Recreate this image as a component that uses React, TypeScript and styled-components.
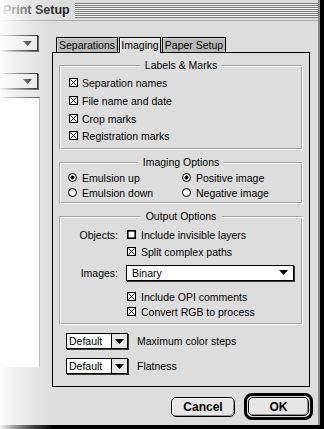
import React from "react";
import styled, { createGlobalStyle } from "styled-components";

const GlobalStyle = createGlobalStyle`
  html, body {
    margin: 0;
    padding: 0;
    background: #ffffff;
  }
  body {
    font-family: "Liberation Sans", Arial, sans-serif;
    font-size: 10.5px;
    color: #000000;
  }
`;

const Screen = styled.div`
  position: relative;
  width: 324px;
  height: 429px;
  background: #000000;
  overflow: hidden;
`;

const Window = styled.div`
  width: 318px;
  height: 425px;
  border-right: 2px solid #8a8a8a;
  background: #dddddd;
  display: flex;
  flex-direction: column;
`;

const TitleBar = styled.div`
  height: 20px;
  border-bottom: 1px solid #a8a8a8;
  display: flex;
  align-items: center;
  gap: 5px;
  padding-left: 3px;
  background: #dddddd;
`;

const Title = styled.span`
  font-size: 12.5px;
  font-weight: bold;
  color: #222222;
  white-space: nowrap;
`;

const Stripes = styled.div`
  flex: 1;
  height: 15px;
  margin-top: 1px;
  background: repeating-linear-gradient(
    to bottom,
    #7a7a7a 0px,
    #7a7a7a 1px,
    #f4f4f4 1px,
    #f4f4f4 2px
  );
`;

const Body = styled.div`
  flex: 1;
  display: flex;
`;

const SideColumn = styled.div`
  width: 52px;
  display: flex;
  flex-direction: column;
  align-items: flex-start;
  padding-top: 14px;
  box-sizing: border-box;
`;

const SidePopup = styled.div<{ $mt?: number }>`
  margin-left: -12px;
  margin-top: ${(p) => p.$mt ?? 0}px;
  width: 50px;
  height: 16px;
  box-sizing: border-box;
  border: 1px solid #000000;
  box-shadow: 1px 1px 0 #4a4a4a;
  background: #e4e4e4;
  display: flex;
  align-items: center;
  justify-content: flex-end;
  padding-right: 5px;
`;

const SideList = styled.div`
  margin-top: 8px;
  width: 40px;
  height: 270px;
  box-sizing: border-box;
  background: #ffffff;
  border-top: 1px solid #333333;
  border-right: 1px solid #b0b0b0;
`;

const Main = styled.div`
  flex: 1;
  display: flex;
  flex-direction: column;
`;

const TabStrip = styled.div`
  display: flex;
  align-items: flex-start;
  gap: 1px;
  height: 15px;
  margin-top: 16px;
  padding-left: 4px;
  position: relative;
  z-index: 1;
`;

const Tab = styled.div<{ $w: number; $active?: boolean }>`
  width: ${(p) => p.$w}px;
  height: ${(p) => (p.$active ? 16 : 15)}px;
  box-sizing: border-box;
  border: 1px solid #000000;
  border-bottom: none;
  background: ${(p) => (p.$active ? "#dddddd" : "#bababa")};
  box-shadow: inset 1px 1px 0 ${(p) => (p.$active ? "#f4f4f4" : "#d4d4d4")};
  font-size: 10.5px;
  line-height: 14px;
  text-align: center;
  white-space: nowrap;
`;

const Panel = styled.div`
  width: 258px;
  height: 335px;
  box-sizing: border-box;
  border: 1px solid #000000;
  background: #dddddd;
  padding: 12px 6px 0 6px;
  display: flex;
  flex-direction: column;
`;

const GroupBox = styled.div<{ $h: number; $mt?: number; $pt: number; $pl?: number }>`
  position: relative;
  height: ${(p) => p.$h}px;
  margin-top: ${(p) => p.$mt ?? 0}px;
  box-sizing: border-box;
  border: 1px solid #a6a6a6;
  border-right-color: #ffffff;
  border-bottom-color: #ffffff;
  box-shadow: inset 1px 1px 0 #ffffff, inset -1px -1px 0 #a6a6a6;
  padding-top: ${(p) => p.$pt}px;
  padding-left: ${(p) => p.$pl ?? 0}px;
`;

const Caption = styled.span`
  position: absolute;
  top: -8px;
  left: 50%;
  transform: translateX(-50%);
  padding: 0 5px;
  background: #dddddd;
  line-height: 14px;
  white-space: nowrap;
`;

const CheckRow = styled.div<{ $mt?: number }>`
  height: 17px;
  margin-top: ${(p) => p.$mt ?? 0}px;
  display: flex;
  align-items: center;
  gap: 4px;
  white-space: nowrap;
`;

const RadioGrid = styled.div`
  display: grid;
  grid-template-columns: 114px 1fr;
  grid-auto-rows: 15px;
`;

const RadioRow = styled.div`
  display: flex;
  align-items: center;
  gap: 5px;
  white-space: nowrap;
`;

const OutRow = styled.div<{ $mt?: number; $h?: number }>`
  display: grid;
  grid-template-columns: 58px 1fr;
  column-gap: 9px;
  align-items: center;
  height: ${(p) => p.$h ?? 15}px;
  margin-top: ${(p) => p.$mt ?? 0}px;
`;

const OutLabel = styled.span`
  text-align: right;
  white-space: nowrap;
`;

const OutCheck = styled.div`
  display: flex;
  align-items: center;
  gap: 5px;
  white-space: nowrap;
`;

const WidePopup = styled.div`
  width: 168px;
  height: 16px;
  margin-left: -1px;
  box-sizing: border-box;
  border: 1px solid #000000;
  box-shadow: 1px 1px 0 #3a3a3a;
  background: #ffffff;
  display: flex;
  align-items: center;
  justify-content: space-between;
  padding: 0 5px 0 5px;
`;

const StepStack = styled.div`
  margin-top: 8px;
  padding-left: 7px;
  display: flex;
  flex-direction: column;
  gap: 9px;
`;

const StepRow = styled.div`
  display: flex;
  align-items: center;
  gap: 9px;
  white-space: nowrap;
`;

const SmallPopup = styled.div`
  width: 62px;
  height: 16px;
  box-sizing: border-box;
  border: 1px solid #000000;
  box-shadow: 1px 1px 0 #3a3a3a;
  background: #ffffff;
  display: flex;
`;

const PopupValue = styled.span`
  flex: 1;
  padding-left: 2px;
  line-height: 14px;
`;

const PopupArrowCell = styled.span`
  width: 15px;
  border-left: 1px solid #000000;
  background: #e6e6e6;
  display: flex;
  align-items: center;
  justify-content: center;
`;

const ButtonRow = styled.div`
  margin-top: 6px;
  padding-right: 5px;
  display: flex;
  justify-content: flex-end;
  align-items: center;
  gap: 9px;
`;

const PushButton = styled.div<{ $w: number; $h: number }>`
  width: ${(p) => p.$w}px;
  height: ${(p) => p.$h}px;
  box-sizing: border-box;
  border: 1px solid #000000;
  border-radius: 5px;
  background: #e6e6e6;
  box-shadow: inset 1px 1px 0 #ffffff, inset -1px -1px 0 #8e8e8e;
  font-size: 12px;
  font-weight: bold;
  display: flex;
  align-items: center;
  justify-content: center;
`;

const DefaultRing = styled.div`
  border: 3px solid #000000;
  border-radius: 8px;
  padding: 1px;
`;

const FadeOverlay = styled.div`
  position: absolute;
  left: 0;
  top: 0;
  bottom: 0;
  width: 56px;
  pointer-events: none;
  background: linear-gradient(
    to right,
    rgba(255, 255, 255, 0.96) 0px,
    rgba(255, 255, 255, 0.62) 14px,
    rgba(255, 255, 255, 0.25) 34px,
    rgba(255, 255, 255, 0) 54px
  );
`;

const Arrow = () => (
  <svg width="9" height="5" viewBox="0 0 9 5">
    <polygon points="0,0 9,0 4.5,5" fill="#000" />
  </svg>
);

const CheckBox = ({ checked = true }: { checked?: boolean }) => (
  <svg width="9" height="9" viewBox="0 0 9 9" style={{ flex: "none" }}>
    {checked ? (
      <>
        <rect x="0.5" y="0.5" width="8" height="8" fill="#fff" stroke="#000" />
        <path d="M1.5 1.5L7.5 7.5M7.5 1.5L1.5 7.5" stroke="#000" strokeWidth="1" />
      </>
    ) : (
      <rect x="0.8" y="0.8" width="7.4" height="7.4" fill="#fff" stroke="#000" strokeWidth="1.6" />
    )}
  </svg>
);

const Radio = ({ on }: { on?: boolean }) => (
  <svg width="9" height="9" viewBox="0 0 9 9" style={{ flex: "none" }}>
    <circle cx="4.5" cy="4.5" r="4" fill="#fff" stroke="#000" />
    {on && <circle cx="4.5" cy="4.5" r="2" fill="#000" />}
  </svg>
);

const labelMarks = [
  { text: "Separation names", mt: 0 },
  { text: "File name and date", mt: 1 },
  { text: "Crop marks", mt: 1 },
  { text: "Registration marks", mt: 0 },
];

export default function App() {
  return (
    <>
      <GlobalStyle />
      <Screen>
        <Window>
          <TitleBar>
            <Title>Print Setup</Title>
            <Stripes />
          </TitleBar>
          <Body>
            <SideColumn>
              <SidePopup>
                <Arrow />
              </SidePopup>
              <SidePopup $mt={22}>
                <Arrow />
              </SidePopup>
              <SideList />
            </SideColumn>
            <Main>
              <TabStrip>
                <Tab $w={62}>Separations</Tab>
                <Tab $w={42} $active>
                  Imaging
                </Tab>
                <Tab $w={64}>Paper Setup</Tab>
              </TabStrip>
              <Panel>
                <GroupBox $h={85} $pt={8} $pl={9}>
                  <Caption>Labels &amp; Marks</Caption>
                  {labelMarks.map((m) => (
                    <CheckRow key={m.text} $mt={m.mt}>
                      <CheckBox />
                      {m.text}
                    </CheckRow>
                  ))}
                </GroupBox>

                <GroupBox $h={42} $mt={12} $pt={7} $pl={8}>
                  <Caption>Imaging Options</Caption>
                  <RadioGrid>
                    <RadioRow>
                      <Radio on />
                      Emulsion up
                    </RadioRow>
                    <RadioRow>
                      <Radio on />
                      Positive image
                    </RadioRow>
                    <RadioRow>
                      <Radio />
                      Emulsion down
                    </RadioRow>
                    <RadioRow>
                      <Radio />
                      Negative image
                    </RadioRow>
                  </RadioGrid>
                </GroupBox>

                <GroupBox $h={109} $mt={12} $pt={10}>
                  <Caption>Output Options</Caption>
                  <OutRow>
                    <OutLabel>Objects:</OutLabel>
                    <OutCheck>
                      <CheckBox checked={false} />
                      Include invisible layers
                    </OutCheck>
                  </OutRow>
                  <OutRow $mt={2}>
                    <span />
                    <OutCheck>
                      <CheckBox />
                      Split complex paths
                    </OutCheck>
                  </OutRow>
                  <OutRow $mt={5} $h={17}>
                    <OutLabel>Images:</OutLabel>
                    <WidePopup>
                      <span>Binary</span>
                      <Arrow />
                    </WidePopup>
                  </OutRow>
                  <OutRow $mt={8}>
                    <span />
                    <OutCheck>
                      <CheckBox />
                      Include OPI comments
                    </OutCheck>
                  </OutRow>
                  <OutRow>
                    <span />
                    <OutCheck>
                      <CheckBox />
                      Convert RGB to process
                    </OutCheck>
                  </OutRow>
                </GroupBox>

                <StepStack>
                  <StepRow>
                    <SmallPopup>
                      <PopupValue>Default</PopupValue>
                      <PopupArrowCell>
                        <Arrow />
                      </PopupArrowCell>
                    </SmallPopup>
                    Maximum color steps
                  </StepRow>
                  <StepRow>
                    <SmallPopup>
                      <PopupValue>Default</PopupValue>
                      <PopupArrowCell>
                        <Arrow />
                      </PopupArrowCell>
                    </SmallPopup>
                    Flatness
                  </StepRow>
                </StepStack>
              </Panel>
              <ButtonRow>
                <PushButton $w={64} $h={20}>
                  Cancel
                </PushButton>
                <DefaultRing>
                  <PushButton $w={61} $h={19}>
                    OK
                  </PushButton>
                </DefaultRing>
              </ButtonRow>
            </Main>
          </Body>
        </Window>
        <FadeOverlay />
      </Screen>
    </>
  );
}
